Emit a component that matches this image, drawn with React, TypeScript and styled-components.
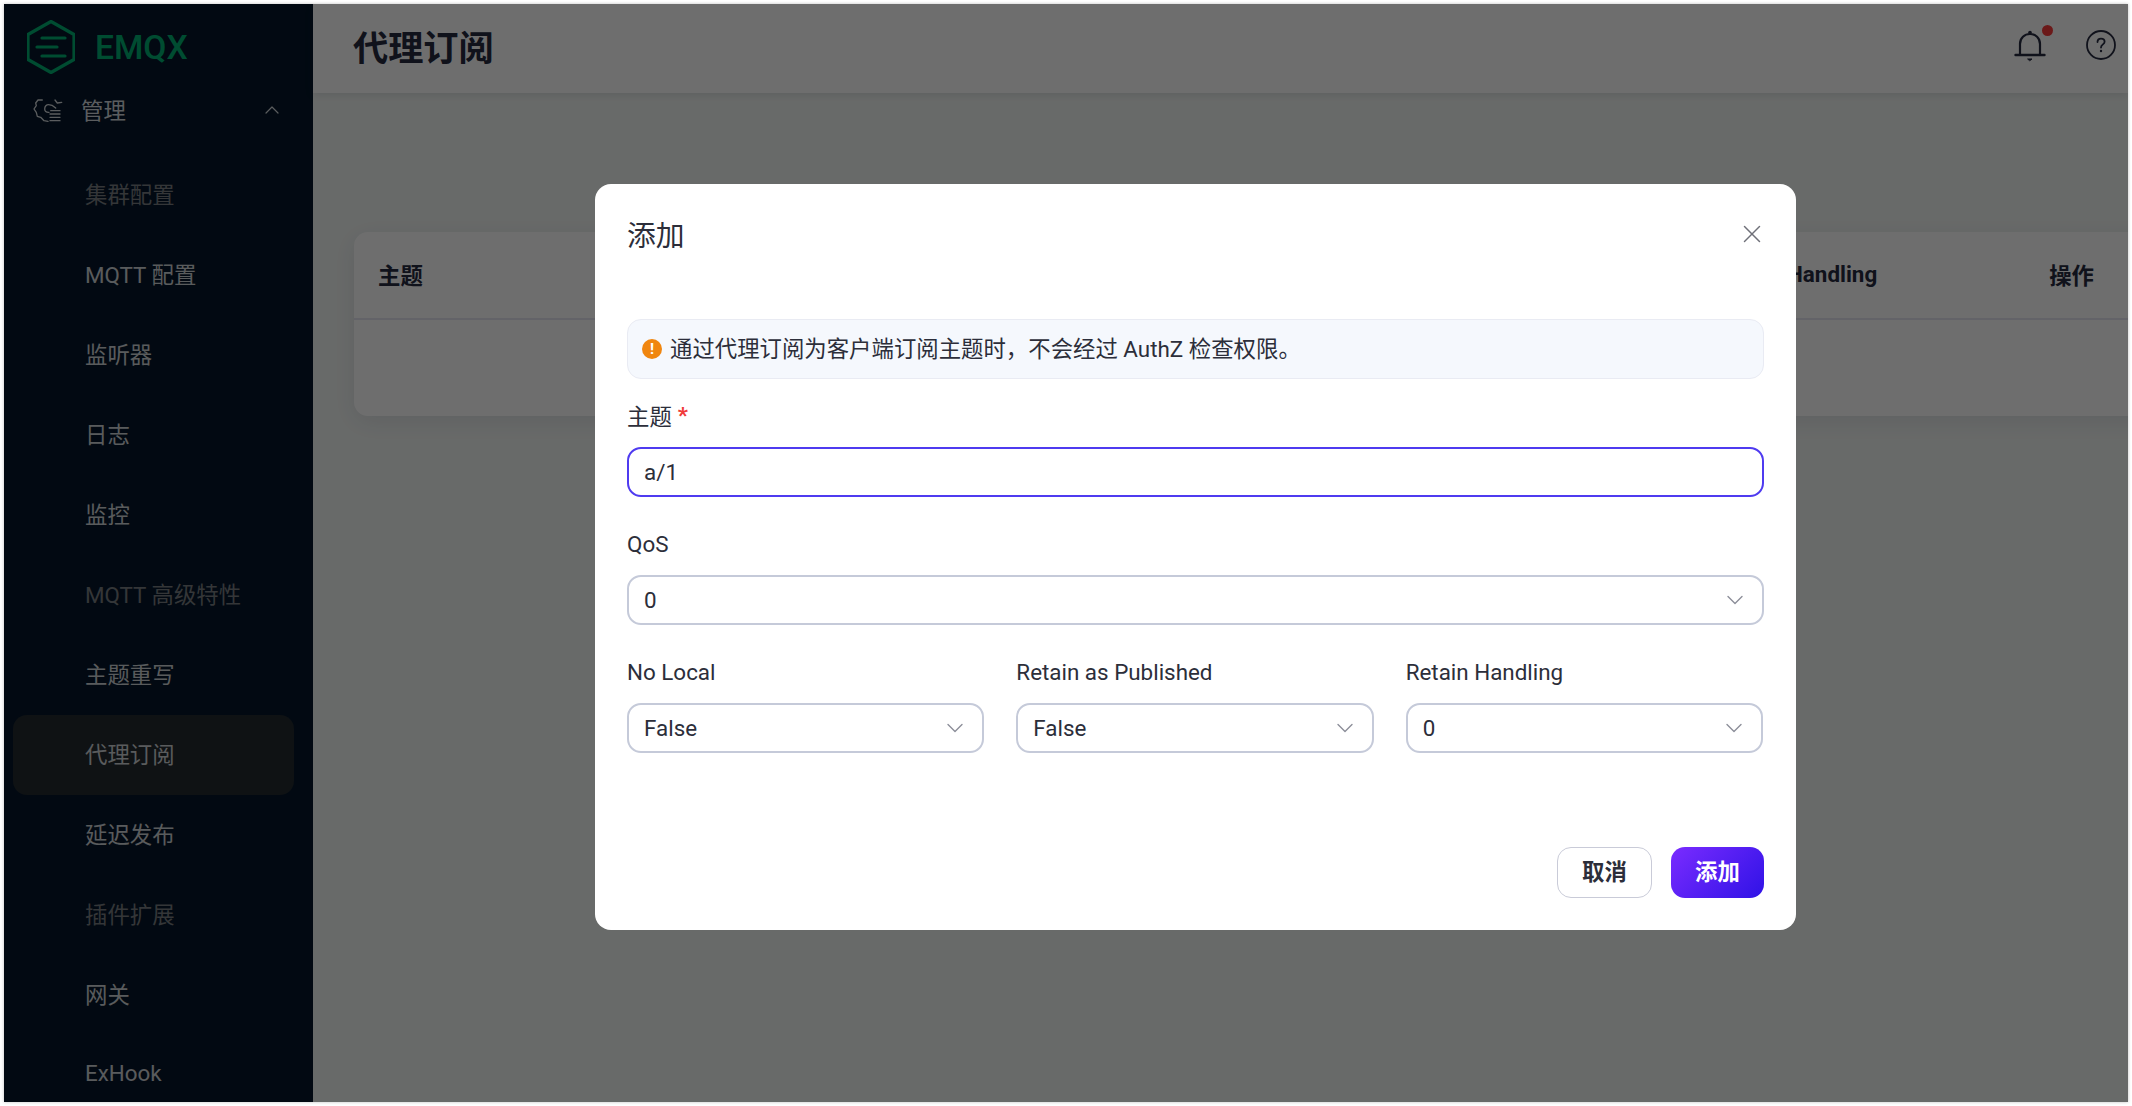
import React from 'react';
import styled, { createGlobalStyle } from 'styled-components';
import { X, ChevronDown, ChevronUp } from 'lucide-react';

const FONT = `Roboto, "Noto Sans CJK SC", sans-serif`;

const GlobalStyle = createGlobalStyle`
  html, body {
    margin: 0;
    padding: 0;
    background: #fff;
    font-family: ${FONT};
  }
  * { box-sizing: border-box; }
`;

const Frame = styled.div`
  position: relative;
  width: 2124px;
  height: 1098px;
  margin: 4px;
  display: flex;
  overflow: hidden;
  box-shadow: 0 0 3px rgba(0, 0, 0, 0.25);
`;

const Sidebar = styled.aside`
  width: 309px;
  flex: none;
  background: #05172a;
  overflow: hidden;
`;

const LogoRow = styled.div`
  height: 70px;
  padding: 16px 0 0 23px;
  display: flex;
  align-items: flex-start;
  gap: 20px;
`;

const LogoText = styled.span`
  margin-top: 11px;
  font-size: 33.6px;
  font-weight: 500;
  color: #00b173;
  line-height: 1;
`;

const GroupRow = styled.div`
  height: 72px;
  padding: 0 29px 0 28px;
  display: flex;
  align-items: center;
  font-size: 22.4px;
  color: #d4d8dc;
`;

const GroupLabel = styled.span`
  margin: -2px 0 0 17px;
  flex: 1;
`;

const MenuList = styled.div`
  padding: 9px 19px 0 9px;
`;

const MenuItem = styled.div<{ $active?: boolean; $disabled?: boolean }>`
  height: 80px;
  padding: 0 0 4px 72px;
  display: flex;
  align-items: center;
  font-size: 22.4px;
  border-radius: 14px;
  color: ${(p) => (p.$disabled ? '#7a7e82' : '#cfd2d6')};
  background: ${(p) => (p.$active ? '#232a30' : 'transparent')};
`;

const Main = styled.main`
  flex: 1;
  min-width: 0;
  background: #f2f6f4;
`;

const Header = styled.header`
  height: 89px;
  padding: 0 12px 7px 40px;
  display: flex;
  align-items: center;
  background: #fff;
  box-shadow: 0 2px 8px rgba(30, 30, 60, 0.12);
`;

const PageTitle = styled.h1`
  flex: 1;
  margin: 0;
  font-size: 35.2px;
  font-weight: 600;
  color: #262a40;
`;

const BellWrap = styled.div`
  position: relative;
  width: 34px;
  height: 34px;
  margin-right: 39px;
`;

const BellDot = styled.span`
  position: absolute;
  top: -3.5px;
  right: -5.5px;
  width: 11px;
  height: 11px;
  border-radius: 50%;
  background: #f93b3b;
`;

const Content = styled.div`
  padding: 139px 0 0 41px;
`;

const Card = styled.section`
  width: 1800px;
  height: 184px;
  border-radius: 14px 0 0 14px;
  background: #fff;
  box-shadow: 0 6px 24px rgba(40, 40, 80, 0.1);
`;

const TableHead = styled.div`
  height: 88px;
  padding: 0 0 3px 24px;
  display: flex;
  align-items: center;
  justify-content: space-between;
  border-bottom: 2px solid #e6e6f0;
  font-size: 22.4px;
  font-weight: 700;
  color: #262a40;
`;

const HeadRight = styled.div`
  display: flex;
  align-items: center;
  width: 437px;
  justify-content: space-between;
  padding-right: 60px;
`;

const Overlay = styled.div`
  position: absolute;
  inset: 0;
  background: rgba(0, 0, 0, 0.57);
  padding: 180px 0 0 591px;
`;

const Modal = styled.div`
  width: 1201px;
  height: 746px;
  padding: 0 32px;
  background: #fff;
  border-radius: 16px;
  color: #2c2e3a;
`;

const ModalHead = styled.div`
  height: 135px;
  padding-bottom: 36px;
  display: flex;
  align-items: center;
  justify-content: space-between;
`;

const ModalTitle = styled.h2`
  margin: 0;
  font-size: 28.8px;
  font-weight: 400;
`;

const CloseIcon = styled(X)`
  width: 30px;
  height: 30px;
  color: #6f7079;
  margin-right: -3px;
`;

const Alert = styled.div`
  height: 60px;
  padding: 0 14px;
  display: flex;
  align-items: center;
  gap: 8px;
  background: #f5f8fd;
  border: 1.5px solid #e9ebf3;
  border-radius: 14px;
  font-size: 22.4px;
`;

const AlertIcon = styled.span`
  width: 20px;
  height: 20px;
  flex: none;
  display: flex;
  align-items: center;
  justify-content: center;
  border-radius: 50%;
  background: #f0860f;
  color: #fff;
  font-size: 15px;
  font-weight: 700;
`;

const AlertText = styled.span`
  margin-top: -4px;
`;

const Field = styled.div`
  flex: 1;
  min-width: 0;
  display: flex;
  flex-direction: column;
`;

const FieldTop = styled(Field)`
  margin-top: 18px;
`;

const FieldNext = styled(Field)`
  margin-top: 28px;
`;

const Label = styled.label<{ $cjk?: boolean }>`
  height: 50px;
  padding-bottom: ${(p) => (p.$cjk ? '15px' : '12px')};
  display: flex;
  align-items: center;
  gap: 6px;
  font-size: 22.4px;
`;

const Required = styled.span`
  color: #f03a3a;
  font-weight: 700;
`;

const Control = styled.div<{ $focused?: boolean }>`
  height: 50px;
  padding: 0 16px 0 15px;
  display: flex;
  align-items: center;
  justify-content: space-between;
  font-size: 22.4px;
  border-radius: 14px;
  border: 2px solid ${(p) => (p.$focused ? '#4f3bf0' : '#c5cad9')};
`;

const Arrow = styled(ChevronDown)`
  width: 28px;
  height: 28px;
  margin-right: -3px;
  color: #8c8e99;
`;

const Row = styled.div`
  margin: 28px 1px 0 0;
  display: flex;
  gap: 32px;
`;

const Footer = styled.div`
  margin-top: 94px;
  display: flex;
  justify-content: flex-end;
  gap: 19px;
`;

const Button = styled.button<{ $primary?: boolean }>`
  height: 51px;
  width: ${(p) => (p.$primary ? '93px' : '95px')};
  padding: 0 0 6px;
  border-radius: 14px;
  font-family: ${FONT};
  font-size: 22.4px;
  font-weight: 700;
  color: ${(p) => (p.$primary ? '#fff' : '#2c2e3a')};
  border: ${(p) => (p.$primary ? 'none' : '1.5px solid #c9cbd8')};
  background: ${(p) => (p.$primary ? 'linear-gradient(135deg, #7a2cff, #2f12e6)' : '#fff')};
`;

const MENU = [
  { label: '集群配置', disabled: true },
  { label: 'MQTT 配置' },
  { label: '监听器' },
  { label: '日志' },
  { label: '监控' },
  { label: 'MQTT 高级特性', disabled: true },
  { label: '主题重写' },
  { label: '代理订阅', active: true },
  { label: '延迟发布' },
  { label: '插件扩展', disabled: true },
  { label: '网关' },
  { label: 'ExHook' },
];

const Logo = () => (
  <svg width="48" height="54" viewBox="0 0 48 54" fill="none" stroke="#00b173" strokeWidth="3.2" strokeLinejoin="round" strokeLinecap="round">
    <path d="M24 1.5 L47 14.5 V39.5 L24 52.5 L1 39.5 V14.5 Z" />
    <path d="M15 18 H38 M10 27 H30 M15 36 H38" />
  </svg>
);

const ManageIcon = () => (
  <svg width="32" height="26" viewBox="8 8 32 26" fill="none" stroke="#d4d8dc" strokeWidth="1.3" strokeLinejoin="round" strokeLinecap="round">
    <path d="M18.3 11 H14 L11.7 14 L12.3 16.7 L10 20 L12.3 23.3 L13.3 27.3 L16.7 28.3 L20 31.7 L24 32.3" />
    <path d="M31 11 L33.3 14 L37.7 13.3" />
    <path d="M25 23.3 C22 23.5 20.7 22 20.7 20 C20.7 17 22.5 15.7 24.5 15.7 C27 15.7 29 16.5 31.7 19" />
    <path d="M26.7 21.7 H36 M26 25 H36 M26 28.3 H36 M26 31.7 H36" />
  </svg>
);

const Bell = () => (
  <svg width="34" height="34" viewBox="0 0 34 34" fill="none" stroke="#262a40" strokeWidth="2.2" strokeLinecap="round">
    <path d="M7 27 V16 C7 10 11.5 6 17 6 C22.5 6 27 10 27 16 V27" />
    <path d="M2.5 27 H31.5" strokeWidth="2.4" />
    <circle cx="17" cy="4.5" r="1.8" fill="#262a40" stroke="none" />
    <path d="M15 31 H19 L17 32.5 Z" fill="#262a40" strokeWidth="1" />
  </svg>
);

const Help = () => (
  <svg width="30" height="30" viewBox="0 0 30 30" fill="none" stroke="#262a40" strokeWidth="1.8" strokeLinecap="round">
    <circle cx="15" cy="15" r="14" />
    <path d="M11.5 12 C11.5 9.8 13 8.6 15 8.6 C17 8.6 18.6 9.9 18.6 11.8 C18.6 14.4 15 14.5 15 17.5" />
    <circle cx="15" cy="21" r="1.2" fill="#262a40" stroke="none" />
  </svg>
);

function App() {
  return (
    <>
      <GlobalStyle />
      <Frame>
        <Sidebar>
          <LogoRow>
            <Logo />
            <LogoText>EMQX</LogoText>
          </LogoRow>
          <GroupRow>
            <ManageIcon />
            <GroupLabel>管理</GroupLabel>
            <ChevronUp size={24} strokeWidth={1.2} color="#d4d8dc" />
          </GroupRow>
          <MenuList>
            {MENU.map((item) => (
              <MenuItem key={item.label} $active={item.active} $disabled={item.disabled}>
                {item.label}
              </MenuItem>
            ))}
          </MenuList>
        </Sidebar>
        <Main>
          <Header>
            <PageTitle>代理订阅</PageTitle>
            <BellWrap>
              <Bell />
              <BellDot />
            </BellWrap>
            <Help />
          </Header>
          <Content>
            <Card>
              <TableHead>
                <span>主题</span>
                <HeadRight>
                  <span>Retain Handling</span>
                  <span>操作</span>
                </HeadRight>
              </TableHead>
            </Card>
          </Content>
        </Main>
        <Overlay>
          <Modal>
            <ModalHead>
              <ModalTitle>添加</ModalTitle>
              <CloseIcon strokeWidth={1.2} />
            </ModalHead>
            <Alert>
              <AlertIcon>!</AlertIcon>
              <AlertText>通过代理订阅为客户端订阅主题时，不会经过 AuthZ 检查权限。</AlertText>
            </Alert>
            <FieldTop>
              <Label $cjk>
                主题 <Required>*</Required>
              </Label>
              <Control $focused>a/1</Control>
            </FieldTop>
            <FieldNext>
              <Label>QoS</Label>
              <Control>
                0
                <Arrow strokeWidth={1.2} />
              </Control>
            </FieldNext>
            <Row>
              <Field>
                <Label>No Local</Label>
                <Control>
                  False
                  <Arrow strokeWidth={1.2} />
                </Control>
              </Field>
              <Field>
                <Label>Retain as Published</Label>
                <Control>
                  False
                  <Arrow strokeWidth={1.2} />
                </Control>
              </Field>
              <Field>
                <Label>Retain Handling</Label>
                <Control>
                  0
                  <Arrow strokeWidth={1.2} />
                </Control>
              </Field>
            </Row>
            <Footer>
              <Button>取消</Button>
              <Button $primary>添加</Button>
            </Footer>
          </Modal>
        </Overlay>
      </Frame>
    </>
  );
}

export default App;
